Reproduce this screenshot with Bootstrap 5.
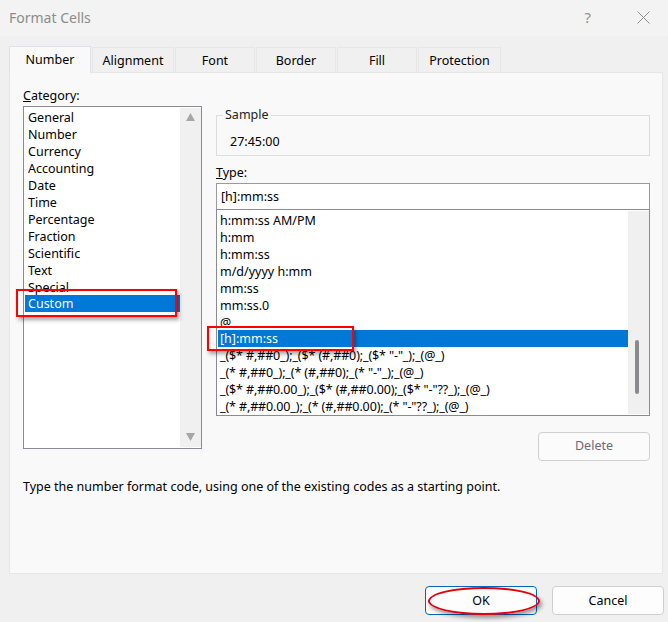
<!DOCTYPE html>
<html lang="en">
<head>
<meta charset="utf-8">
<title>Format Cells</title>
<link rel="stylesheet" href="https://cdn.jsdelivr.net/npm/bootstrap@5.3.0/dist/css/bootstrap.min.css">
<style>
html,body{margin:0;height:622px;overflow:hidden}
body{background:#f0f0f0;font-family:"Noto Sans","Open Sans",sans-serif;font-size:12.5px;color:#000;line-height:17px}
.ttl{height:36px;background:#f3f3f3;padding:0 18px 2px 9px}
.ttl-text{font-size:14px;color:#8c8c8c}
.ttl-help{font-size:15px;color:#909090;margin-right:46px}
.tabstrip{margin:10px 0 0 9px;padding:0;border:0;height:26px;gap:1px;flex-wrap:nowrap}
.tabstrip .nav-link{width:80px;height:25px;margin-top:1px;padding:0;border:1px solid #e6e6e6;border-bottom:0;border-radius:0;background:#f0f0f0;color:#000;font-size:12.5px;line-height:26px;text-align:center}
.tabstrip .nav-link.active{width:82px;height:27px;margin-top:0;background:#f9f9f9;line-height:26px;position:relative;z-index:2}
.tabstrip .tab-w{width:83px}
.tabstrip .tab-a{width:82px}
.pane{width:654px;height:502px;margin-left:9px;background:#f9f9f9;border:1px solid #e6e6e6;padding:13px 0 0 13px}
.fld-label{height:20px;line-height:20px;display:block;margin:0}
.cols{gap:14px}
.catcol{width:179px}
.typecol{width:434px;padding-top:20px}
.lb{position:relative;background:#fff;border:1px solid #8a8a96;overflow:hidden}
.lb-cat{height:343px;padding:2px 0 0 1px}
.lb-type{height:207px;margin-top:-1px;padding:2px 0 0 1px}
.lb-rows{flex:1 1 auto;min-width:0;overflow:hidden;border-radius:0}
.lb-rows .list-group-item{border:0;border-radius:0;padding:0 0 0 3px;height:17px;line-height:17px;background:transparent;color:#000;font-size:12.5px;white-space:nowrap}
.lb-rows .list-group-item.active{background:#0078d7;color:#fff}
.lb-type .lb-rows .list-group-item{padding-left:2px}
.lb-rows .list-group-item.fmt-code{letter-spacing:-.12px}
.sbar{width:21px;flex:0 0 21px;background:#f0f0f0;margin-top:-1px;margin-bottom:1px;position:relative}
.sb-thumb{width:4px;height:54px;margin:129px 0 0 7px;background:#8a8a90;border-radius:2px}
.sb-arrow{display:block;margin:5px auto 0;width:9px;height:8px}
.sb-arrow-down{margin-top:auto;margin-bottom:6px}
.sample{border:1px solid #dcdcdc;height:50px;padding:0 0 0 13px;margin:0;min-width:0}
.sample legend{float:none;width:auto;font-size:12.5px;line-height:18px;margin:0 0 0 -7px;padding:0 2px;color:#222}
.sample-val{margin-top:9px}
.typelabel{margin-top:7px;height:20px;line-height:20px}
.typeinput.form-control{height:27px;border:1px solid #9a9a9a;border-radius:0;padding:0 4px;font-size:12.5px;color:#000;background:#fff;box-shadow:none}
.delbtn.btn{width:112px;height:29px;margin-top:16px;padding:0;font-size:12.5px;border:1px solid #d0d0d0;border-radius:4px;background:#fbfbfb;color:#6f6878;opacity:1}
.desc{margin-top:17px;line-height:18px}
.foot{gap:15px;padding-right:4px;margin-top:12px}
.foot .btn{width:112px;height:29px;padding:1px 0 0;font-size:12.5px;color:#000;background:#fdfdfd;border:1px solid #d0d0d0;border-radius:4px;position:relative}
.foot .btn.okbtn{border-color:#0067c0}
.redbox{position:absolute;border:2px solid #f00;box-shadow:2px 3px 4px rgba(0,0,0,.35);pointer-events:none;z-index:5}
.redbox-cat{left:16px;top:289px;width:161px;height:28px}
.redbox-type{left:207px;top:326px;width:147px;height:25px}
.redring{position:absolute;left:2px;top:0;width:112px;height:28px;border:2px solid #e6000f;border-radius:50%;box-shadow:2px 3px 4px rgba(0,0,0,.4);pointer-events:none}
.x-ic{width:13px;height:13px}
</style>
</head>
<body class="position-relative">
<div class="ttl d-flex align-items-center justify-content-between">
  <span class="ttl-text">Format Cells</span>
  <div class="d-flex align-items-center">
    <span class="ttl-help">?</span>
    <svg class="x-ic" viewBox="0 0 13 13" aria-label="Close"><path d="M.5.5l12 12M12.5.5l-12 12" stroke="#8f8f8f" stroke-width="1" fill="none"/></svg>
  </div>
</div>

<ul class="nav nav-tabs tabstrip">
  <li class="nav-item"><a class="nav-link active" href="#">Number</a></li>
  <li class="nav-item"><a class="nav-link tab-a" href="#">Alignment</a></li>
  <li class="nav-item"><a class="nav-link" href="#">Font</a></li>
  <li class="nav-item"><a class="nav-link" href="#">Border</a></li>
  <li class="nav-item"><a class="nav-link" href="#">Fill</a></li>
  <li class="nav-item"><a class="nav-link tab-w" href="#">Protection</a></li>
</ul>

<div class="pane">
  <div class="d-flex cols">
    <div class="catcol">
      <label class="fld-label"><u>C</u>ategory:</label>
      <div class="lb lb-cat d-flex">
        <ul class="list-group lb-rows">
          <li class="list-group-item">General</li>
          <li class="list-group-item">Number</li>
          <li class="list-group-item">Currency</li>
          <li class="list-group-item">Accounting</li>
          <li class="list-group-item">Date</li>
          <li class="list-group-item">Time</li>
          <li class="list-group-item">Percentage</li>
          <li class="list-group-item">Fraction</li>
          <li class="list-group-item">Scientific</li>
          <li class="list-group-item">Text</li>
          <li class="list-group-item">Special</li>
          <li class="list-group-item active">Custom</li>
        </ul>
        <div class="sbar d-flex flex-column">
          <svg class="sb-arrow" viewBox="0 0 9 8"><path d="M4.5 0L9 8H0z" fill="#a6a6a6"/></svg>
          <svg class="sb-arrow sb-arrow-down" viewBox="0 0 9 8"><path d="M4.5 8L9 0H0z" fill="#a6a6a6"/></svg>
        </div>
      </div>
    </div>
    <div class="typecol">
      <fieldset class="sample">
        <legend>Sample</legend>
        <div class="sample-val">27:45:00</div>
      </fieldset>
      <label class="fld-label typelabel"><u>T</u>ype:</label>
      <input class="form-control typeinput" type="text" value="[h]:mm:ss">
      <div class="lb lb-type d-flex">
        <ul class="list-group lb-rows">
          <li class="list-group-item">h:mm:ss AM/PM</li>
          <li class="list-group-item">h:mm</li>
          <li class="list-group-item">h:mm:ss</li>
          <li class="list-group-item">m/d/yyyy h:mm</li>
          <li class="list-group-item">mm:ss</li>
          <li class="list-group-item">mm:ss.0</li>
          <li class="list-group-item">@</li>
          <li class="list-group-item active">[h]:mm:ss</li>
          <li class="list-group-item fmt-code">_($* #,##0_);_($* (#,##0);_($* "-"_);_(@_)</li>
          <li class="list-group-item fmt-code">_(* #,##0_);_(* (#,##0);_(* "-"_);_(@_)</li>
          <li class="list-group-item fmt-code">_($* #,##0.00_);_($* (#,##0.00);_($* "-"??_);_(@_)</li>
          <li class="list-group-item fmt-code">_(* #,##0.00_);_(* (#,##0.00);_(* "-"??_);_(@_)</li>
        </ul>
        <div class="sbar"><div class="sb-thumb"></div></div>
      </div>
      <div class="d-flex justify-content-end">
        <button class="btn delbtn" type="button" disabled>Delete</button>
      </div>
    </div>
  </div>
  <p class="desc mb-0">Type the number format code, using one of the existing codes as a starting point.</p>
</div>

<div class="d-flex justify-content-end foot">
  <button class="btn okbtn" type="button">OK<span class="redring"></span></button>
  <button class="btn" type="button">Cancel</button>
</div>

<div class="redbox redbox-cat"></div>
<div class="redbox redbox-type"></div>
</body>
</html>
